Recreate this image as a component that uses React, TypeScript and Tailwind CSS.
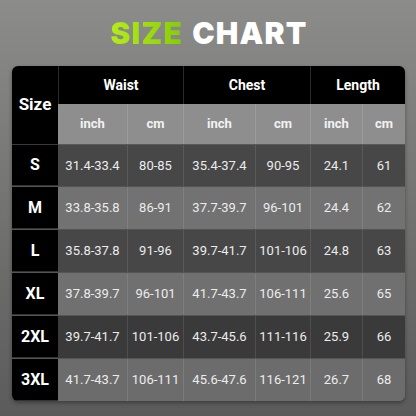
import React from "react";

const cols = ["w-[46px]", "w-[69px]", "w-[56px]", "w-[72px]", "w-[55px]", "w-[52px]", "w-[43px]"];

const rows: { size: string; vals: string[]; bg: string; h: string }[] = [
  { size: "S", vals: ["31.4-33.4", "80-85", "35.4-37.4", "90-95", "24.1", "61"], bg: "bg-[#474747]", h: "h-[42px]" },
  { size: "M", vals: ["33.8-35.8", "86-91", "37.7-39.7", "96-101", "24.4", "62"], bg: "bg-[#727272]", h: "h-[43px]" },
  { size: "L", vals: ["35.8-37.8", "91-96", "39.7-41.7", "101-106", "24.8", "63"], bg: "bg-[#474747]", h: "h-[43px]" },
  { size: "XL", vals: ["37.8-39.7", "96-101", "41.7-43.7", "106-111", "25.6", "65"], bg: "bg-[#707070]", h: "h-[43px]" },
  { size: "2XL", vals: ["39.7-41.7", "101-106", "43.7-45.6", "111-116", "25.9", "66"], bg: "bg-[#3a3a3a]", h: "h-[43px]" },
  { size: "3XL", vals: ["41.7-43.7", "106-111", "45.6-47.6", "116-121", "26.7", "68"], bg: "bg-[#6c6c6c]", h: "h-[42px]" },
];

export default function App() {
  return (
    <div
      className="w-[416px] h-[416px] overflow-hidden bg-gradient-to-b from-[#8c8c8a] via-[#737372] to-[#5b5b5b] flex flex-col"
      style={{ fontFamily: "Roboto, 'Liberation Sans', sans-serif" }}
    >
      <div className="h-[66px] flex items-center justify-center">
        <div
          className="text-[30px] leading-none font-black tracking-[1.2px] flex gap-[9px] pl-[2px]"
          style={{ fontFamily: "Inter, 'DejaVu Sans', sans-serif" }}
        >
          <span className="bg-gradient-to-r from-[#b4ec1a] to-[#86cc06] bg-clip-text text-transparent">SIZE</span>
          <span className="text-white">CHART</span>
        </div>
      </div>
      <div className="ml-[12px] w-[393px] rounded-[6px] overflow-hidden shadow-[0_2px_4px_rgba(0,0,0,0.35)] flex flex-col">
        <div className="flex">
          <div className="w-[46px] h-[79px] bg-black flex items-center justify-center text-white font-bold text-[17px] border-b border-[#3a3a3a]">
            Size
          </div>
          <div className="flex flex-col">
            <div className="flex h-[38px] bg-black text-white font-bold text-[14px]">
              <div className="w-[125px] flex items-center justify-center border-l border-[#2a2a2a]">Waist</div>
              <div className="w-[127px] flex items-center justify-center border-l border-[#2a2a2a]">Chest</div>
              <div className="w-[95px] flex items-center justify-center border-l border-[#2a2a2a]">Length</div>
            </div>
            <div className="flex h-[41px] bg-[#8e8e8e] text-[#f2f2f2] font-bold text-[13px] border-b border-[#5a5a5a]">
              {["inch", "cm", "inch", "cm", "inch", "cm"].map((t, i) => (
                <div
                  key={i}
                  className={`${cols[i + 1]} flex items-center justify-center ${i > 0 ? "border-l border-[#9c9c9c]" : ""}`}
                >
                  {t}
                </div>
              ))}
            </div>
          </div>
        </div>
        {rows.map((r) => (
          <div key={r.size} className={`flex ${r.h} border-b border-[#555555] last:border-b-0`}>
            <div className="w-[46px] bg-black flex items-center justify-center text-white font-bold text-[16px] border-b border-[#333333]">
              {r.size}
            </div>
            {r.vals.map((v, i) => (
              <div
                key={i}
                className={`${cols[i + 1]} ${r.bg} flex items-center justify-center text-[13px] text-[#ececec] ${i > 0 ? "border-l border-white/10" : ""}`}
              >
                {v}
              </div>
            ))}
          </div>
        ))}
      </div>
    </div>
  );
}
